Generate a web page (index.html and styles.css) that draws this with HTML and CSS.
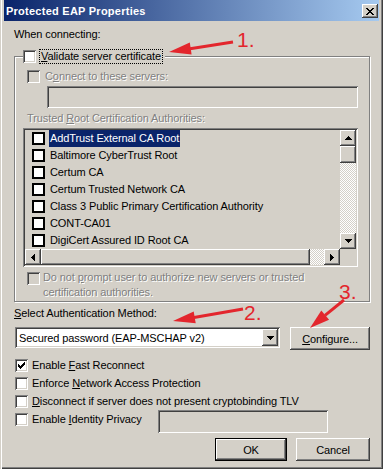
FILE: index.html
```html
<!DOCTYPE html>
<html>
<head>
  <title>Protected EAP Properties</title>
  <link rel="stylesheet" href="styles.css">
</head>
<body>
  <div class="window">
    <div class="titlebar">
      <span class="title">Protected EAP Properties</span>
      <span class="close-btn raised">
        <svg width="8" height="7" viewBox="0 0 8 7"><path d="M0 0h2v1H0zM6 0h2v1H6zM1 1h2v1H1zM5 1h2v1H5zM2 2h4v1H2zM3 3h2v1H3zM2 4h4v1H2zM1 5h2v1H1zM5 5h2v1H5zM0 6h2v1H0zM6 6h2v1H6z"/></svg>
      </span>
    </div>

    <div class="dialog">
      <div class="label">When connecting:</div>

      <fieldset class="group">
        <legend class="group-legend">
          <span class="check"></span>
          <span class="focus-text"><u>V</u>alidate server certificate</span>
        </legend>

        <div class="connect-row">
          <span class="check disabled"></span>
          <span class="disabled-text">C<u>o</u>nnect to these servers:</span>
        </div>
        <div class="servers-box sunken"></div>

        <div class="trusted-label disabled-text">Trusted <u>R</u>oot Certification Authorities:</div>

        <div class="cert-list sunken">
          <div class="cert-rows">
            <div class="cert-row"><span class="list-check"></span><span class="cert-name selected">AddTrust External CA Root</span></div>
            <div class="cert-row"><span class="list-check"></span><span class="cert-name">Baltimore CyberTrust Root</span></div>
            <div class="cert-row"><span class="list-check"></span><span class="cert-name">Certum CA</span></div>
            <div class="cert-row"><span class="list-check"></span><span class="cert-name">Certum Trusted Network CA</span></div>
            <div class="cert-row"><span class="list-check"></span><span class="cert-name">Class 3 Public Primary Certification Authority</span></div>
            <div class="cert-row"><span class="list-check"></span><span class="cert-name">CONT-CA01</span></div>
            <div class="cert-row"><span class="list-check"></span><span class="cert-name">DigiCert Assured ID Root CA</span></div>
          </div>
          <div class="vscroll">
            <span class="sb-btn raised"><svg width="7" height="4" viewBox="0 0 7 4"><path d="M3 0h1v1H3zM2 1h3v1H2zM1 2h5v1H1zM0 3h7v1H0z"/></svg></span>
            <span class="sb-thumb-v raised"></span>
            <span class="sb-track"></span>
            <span class="sb-btn raised"><svg width="7" height="4" viewBox="0 0 7 4"><path d="M0 0h7v1H0zM1 1h5v1H1zM2 2h3v1H2zM3 3h1v1H3z"/></svg></span>
          </div>
          <div class="hscroll">
            <span class="sb-btn raised"><svg width="4" height="7" viewBox="0 0 4 7"><path d="M0 3h1v1H0zM1 2h1v3H1zM2 1h1v5H2zM3 0h1v7H3z"/></svg></span>
            <span class="sb-thumb-h raised"></span>
            <span class="sb-track"></span>
            <span class="sb-btn raised"><svg width="4" height="7" viewBox="0 0 4 7"><path d="M0 0h1v7H0zM1 1h1v5H1zM2 2h1v3H2zM3 3h1v1H3z"/></svg></span>
          </div>
          <div class="sb-corner"></div>
        </div>

        <div class="prompt-row">
          <span class="check disabled"></span>
          <span class="prompt-text disabled-text">Do not <u>p</u>rompt user to authorize new servers or trusted<br>certification authorities.</span>
        </div>
      </fieldset>

      <div class="method-label"><u>S</u>elect Authentication Method:</div>
      <div class="method-row">
        <div class="combo sunken">
          <span class="combo-text">Secured password (EAP-MSCHAP v2)</span>
          <span class="combo-btn raised"><svg width="7" height="4" viewBox="0 0 7 4"><path d="M0 0h7v1H0zM1 1h5v1H1zM2 2h3v1H2zM3 3h1v1H3z"/></svg></span>
        </div>
        <span class="push-btn configure-btn raised"><u>C</u>onfigure...</span>
      </div>

      <div class="options">
        <div class="option-row">
          <span class="check"><svg width="7" height="7" viewBox="0 0 7 7"><path d="M6 0h1v1H6zM5 1h2v1H5zM0 2h1v1H0zM4 2h3v1H4zM0 3h2v1H0zM3 3h3v1H3zM0 4h5v1H0zM1 5h3v1H1zM2 6h1v1H2z"/></svg></span>
          <span>Enable <u>F</u>ast Reconnect</span>
        </div>
        <div class="option-row">
          <span class="check"></span>
          <span>Enforce <u>N</u>etwork Access Protection</span>
        </div>
        <div class="option-row">
          <span class="check"></span>
          <span><u>D</u>isconnect if server does not present cryptobinding TLV</span>
        </div>
        <div class="option-row identity-row">
          <span class="check"></span>
          <span class="identity-label">Enable <u>I</u>dentity Privacy</span>
          <span class="identity-box sunken"></span>
        </div>
      </div>

      <div class="button-row">
        <span class="push-btn ok-btn raised">OK</span>
        <span class="push-btn cancel-btn raised">Cancel</span>
      </div>
    </div>

    <svg class="annotations" width="383" height="469" viewBox="0 0 383 469">
      <line x1="233" y1="42" x2="190" y2="48.7" class="arrow-line"/>
      <polygon points="169,52 191.6,54.6 189.8,42.6" class="arrow-head"/>
      <text x="237" y="47" class="arrow-text">1.</text>

      <line x1="243" y1="309" x2="194" y2="317.4" class="arrow-line"/>
      <polygon points="173,321 195.7,323.2 193.7,311.4" class="arrow-head"/>
      <text x="244" y="320" class="arrow-text">2.</text>

      <line x1="344" y1="300" x2="325" y2="315.3" class="arrow-line"/>
      <polygon points="310,328 329.1,319.7 321.3,310.5" class="arrow-head"/>
      <text x="339" y="299" class="arrow-text">3.</text>
    </svg>
  </div>
</body>
</html>
```

FILE: styles.css
```css
body {
  margin: 0;
  padding: 0;
  font-family: 'Liberation Sans', Arial, sans-serif;
  font-size: 11px;
  letter-spacing: -0.1px;
  color: #000;
  background-color: #d4d0c8;
}

.window {
  position: relative;
  width: 383px;
  height: 469px;
  box-sizing: border-box;
  padding: 0 4px 4px 4px;
  background-color: #d4d0c8;
  box-shadow: inset 1px 0 0 #d4d0c8, inset 2px 0 0 #fff, inset -1px -1px 0 #404040, inset -2px -2px 0 #808080;
}

.raised {
  box-shadow: inset -1px -1px 0 #404040, inset 1px 1px 0 #fff, inset -2px -2px 0 #808080, inset 2px 2px 0 #d4d0c8;
  background-color: #d4d0c8;
}

.sunken {
  box-shadow: inset 1px 1px 0 #808080, inset -1px -1px 0 #fff, inset 2px 2px 0 #404040, inset -2px -2px 0 #d4d0c8;
}

.titlebar {
  height: 21px;
  display: flex;
  align-items: center;
  justify-content: space-between;
  background: linear-gradient(to right, #0a246a, #a6caf0);
}

.title {
  color: #fff;
  font-weight: bold;
  letter-spacing: 0.25px;
  padding-left: 2px;
  padding-top: 1px;
}

.close-btn {
  width: 16px;
  height: 14px;
  margin-right: 1px;
  margin-top: 1px;
  display: flex;
  align-items: center;
  justify-content: center;
}

.dialog {
  padding: 7px 9px 0 10px;
}

.label,
.method-label,
.trusted-label {
  line-height: 13px;
}

/* group box */
.group {
  margin: 8px 0 0 0;
  padding: 0 0 1px 0;
  width: 356px;
  box-sizing: border-box;
  border: 1px solid #808080;
  box-shadow: inset 1px 1px 0 #fff, 1px 1px 0 #fff;
  min-inline-size: 0;
}

.group-legend {
  margin-left: 8px;
  padding: 0 2px 0 0;
  display: flex;
  align-items: center;
  background-color: #d4d0c8;
}

.focus-text {
  margin-left: 3px;
  padding: 0 1px;
  line-height: 13px;
  border: 1px dotted #000;
}

.check {
  width: 13px;
  height: 13px;
  box-sizing: border-box;
  background-color: #fff;
  flex: none;
  display: flex;
  align-items: center;
  justify-content: center;
  box-shadow: inset 1px 1px 0 #808080, inset -1px -1px 0 #fff, inset 2px 2px 0 #404040, inset -2px -2px 0 #d4d0c8;
}

.check.disabled {
  background-color: #d4d0c8;
}

.disabled-text {
  color: #808080;
  text-shadow: 1px 1px 0 #fff;
}

.connect-row {
  margin: 6px 0 0 12px;
  display: flex;
  align-items: center;
  gap: 5px;
  line-height: 13px;
}

.servers-box {
  margin: 3px 0 0 32px;
  width: 311px;
  height: 22px;
  background-color: #d4d0c8;
}

.trusted-label {
  margin: 4px 0 0 12px;
}

/* certificate list */
.cert-list {
  margin: 3px 0 0 8px;
  width: 335px;
  height: 139px;
  box-sizing: border-box;
  padding: 2px;
  display: grid;
  grid-template-columns: 315px 16px;
  grid-template-rows: 119px 16px;
  background-color: #d4d0c8;
}

.cert-rows {
  overflow: hidden;
}

.cert-row {
  height: 17px;
  display: flex;
  align-items: center;
  white-space: nowrap;
}

.list-check {
  width: 13px;
  height: 13px;
  box-sizing: border-box;
  margin-left: 7px;
  border: 2px solid #000;
  background-color: #fff;
  flex: none;
}

.cert-name {
  margin-left: 4px;
  padding: 0 1px;
  line-height: 17px;
}

.cert-name.selected {
  background-color: #0a246a;
  color: #fff;
}

.vscroll {
  display: flex;
  flex-direction: column;
}

.hscroll {
  display: flex;
}

.sb-btn {
  width: 16px;
  height: 16px;
  flex: none;
  display: flex;
  align-items: center;
  justify-content: center;
}

.sb-thumb-v {
  height: 17px;
  flex: none;
}

.sb-thumb-h {
  width: 269px;
  flex: none;
}

.sb-track {
  flex: 1;
  background-color: #fff;
  background-image: conic-gradient(#d4d0c8 25%, #fff 0 50%, #d4d0c8 0 75%, #fff 0);
  background-size: 2px 2px;
}

.sb-corner {
  background-color: #d4d0c8;
}

.prompt-row {
  margin: 5px 0 0 12px;
  display: flex;
  align-items: flex-start;
}

.prompt-text {
  margin: -2px 0 0 3px;
  line-height: 15px;
  white-space: nowrap;
}

/* authentication method */
.method-label {
  margin-top: 5px;
}

.method-row {
  margin-top: 7px;
  display: flex;
  align-items: flex-start;
}

.combo {
  margin-left: 1px;
  width: 265px;
  height: 21px;
  box-sizing: border-box;
  padding: 2px;
  background-color: #fff;
  display: flex;
  align-items: center;
}

.combo-text {
  flex: 1;
  padding-left: 2px;
  white-space: nowrap;
}

.combo-btn {
  width: 16px;
  height: 17px;
  display: flex;
  align-items: center;
  justify-content: center;
}

.push-btn {
  height: 23px;
  box-sizing: border-box;
  display: flex;
  align-items: center;
  justify-content: center;
}

.configure-btn {
  margin-left: 10px;
  width: 80px;
}

.options {
  margin-top: 6px;
}

.option-row {
  height: 18px;
  display: flex;
  align-items: center;
  gap: 4px;
  padding-left: 1px;
  white-space: nowrap;
}

.identity-row {
  height: 23px;
  align-items: flex-start;
}

.identity-row .check {
  margin-top: 3px;
}

.identity-label {
  width: 122px;
  line-height: 18px;
}

.identity-box {
  width: 170px;
  height: 23px;
  background-color: #d4d0c8;
}

.button-row {
  margin-top: 5px;
  display: flex;
  justify-content: flex-end;
  gap: 9px;
}

.ok-btn {
  width: 72px;
  border: 1px solid #000;
}

.cancel-btn {
  width: 74px;
}

/* red callouts drawn over the dialog */
.annotations {
  position: absolute;
  left: 0;
  top: 0;
  pointer-events: none;
}

.arrow-line {
  stroke: #e3262d;
  stroke-width: 3;
}

.arrow-head {
  fill: #e3262d;
}

.arrow-text {
  fill: #e3262d;
  font-family: 'Liberation Sans', Arial, sans-serif;
  font-size: 21px;
  letter-spacing: 0;
}
```
